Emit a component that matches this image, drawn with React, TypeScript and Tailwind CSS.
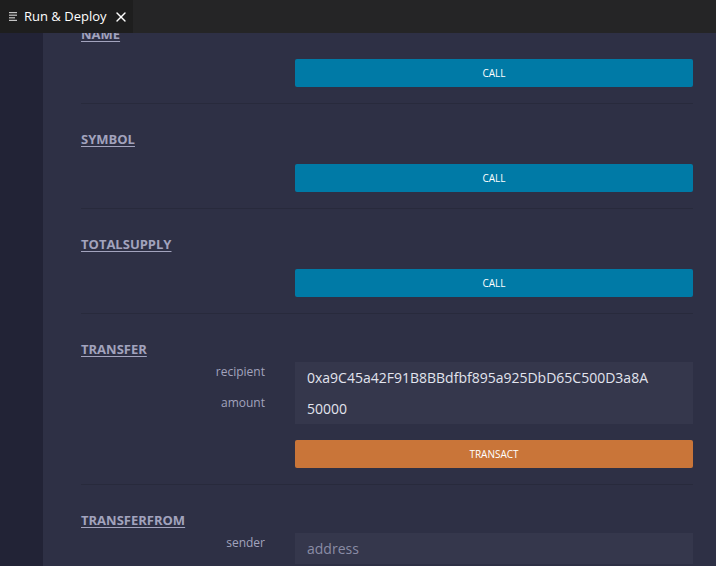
import { X } from "lucide-react";

const font = { fontFamily: '"Open Sans", "Noto Sans", sans-serif' };

function Heading({ title }: { title: string }) {
    return <h3 className="text-[13px] leading-4 font-bold uppercase underline underline-offset-2 text-[#a2a3bd] h-4 whitespace-nowrap">{title}</h3>;
}

function CallSection({ title }: { title: string }) {
    return (
        <section className="pt-[27px] pb-[16px] border-b border-[#282a3c]">
            <Heading title={title} />
            <div className="flex mt-[17px]">
                <div className="w-[214px] shrink-0" />
                <button className="flex-1 h-[28px] rounded-[2px] bg-[#007aa6] text-white text-[10px]">CALL</button>
            </div>
        </section>
    );
}

function InputRow({ label, value, placeholder }: { label: string; value?: string; placeholder?: string }) {
    return (
        <div className="flex h-[31px]">
            <div className="w-[184px] shrink-0 text-right text-[12px] leading-5 text-[#a2a3bd]">{label}</div>
            <div className="w-[30px] shrink-0" />
            <div className="flex-1 bg-[#35374c] px-3 flex items-center">
                {value ? <span className="text-[14px] text-[#e2e4ee]">{value}</span> : <span className="text-[14px] text-[#8a8ca5]">{placeholder}</span>}
            </div>
        </div>
    );
}

export default function App() {
    return (
        <div className="w-[716px] h-[566px] flex flex-col overflow-hidden bg-[#252526]" style={font}>
            <div className="h-[33px] flex shrink-0 bg-[#252526]">
                <div className="w-[133px] shrink-0 bg-[#1e1e1e] flex items-center pl-[9px]">
                    <svg width="9" height="9" viewBox="0 0 9 9" className="shrink-0">
                        <rect x="0" y="0" width="8" height="1.2" fill="#c5c5c5" />
                        <rect x="0" y="2.6" width="8" height="1.2" fill="#c5c5c5" />
                        <rect x="0" y="5.2" width="6" height="1.2" fill="#c5c5c5" />
                        <rect x="0" y="7.8" width="8" height="1.2" fill="#c5c5c5" />
                    </svg>
                    <span className="ml-[6px] text-[13px] text-white whitespace-nowrap">Run &amp; Deploy</span>
                    <X size={16} strokeWidth={2} className="text-white ml-[6px] shrink-0" />
                </div>
            </div>
            <div className="flex flex-1 overflow-hidden">
                <div className="w-[43px] shrink-0 bg-[#222336]" />
                <div className="flex-1 bg-[#2e3045] pl-[38px] pr-[23px] overflow-hidden">
                    <div className="-mt-[34px]">
                        <CallSection title="name" />
                        <CallSection title="symbol" />
                        <CallSection title="totalSupply" />
                        <section className="pt-[27px] pb-[16px] border-b border-[#282a3c]">
                            <Heading title="transfer" />
                            <div className="mt-[5px]">
                                <InputRow label="recipient" value="0xa9C45a42F91B8BBdfbf895a925DbD65C500D3a8A" />
                                <InputRow label="amount" value="50000" />
                            </div>
                            <div className="flex mt-[16px]">
                                <div className="w-[214px] shrink-0" />
                                <button className="flex-1 h-[28px] rounded-[2px] bg-[#c97539] text-white text-[10px]">TRANSACT</button>
                            </div>
                        </section>
                        <section className="pt-[27px]">
                            <Heading title="transferFrom" />
                            <div className="mt-[5px]">
                                <InputRow label="sender" placeholder="address" />
                            </div>
                        </section>
                    </div>
                </div>
            </div>
        </div>
    );
}
